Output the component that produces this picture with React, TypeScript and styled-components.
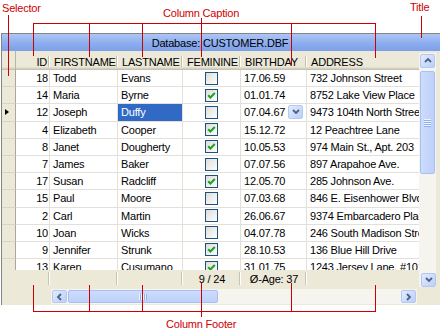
import React from "react";
import styled, { createGlobalStyle } from "styled-components";

const GlobalStyle = createGlobalStyle`
  html, body { margin: 0; padding: 0; background: #ffffff; }
  body { font-family: "Liberation Sans", Arial, sans-serif; }
  #root { width: 440px; height: 334px; }
`;

const COLS = "14px 34px 68px 65px 58px 66px 150px";
const GRID_LINE = "#e2e0d8";
const BEIGE = "#ece9d8";

const Page = styled.div`
  position: relative;
  width: 440px;
  height: 334px;
  overflow: hidden;
  background: #fff;
  padding-top: 33px;
  box-sizing: border-box;
`;

const Frame = styled.div`
  margin-left: 1px;
  width: 439px;
  border-top: 1px solid #858585;
  border-left: 1px solid #858585;
  box-sizing: border-box;
  background: ${BEIGE};
  display: flex;
  flex-direction: column;
`;

const TitleBar = styled.div`
  height: 17px;
  background: linear-gradient(#adc6f5, #8cadee 55%, #7d9fe8);
  display: flex;
  align-items: center;
  justify-content: center;
  padding-right: 2px;
  font-size: 11px;
  letter-spacing: -0.2px;
  color: #000;
`;

const Body = styled.div`
  display: flex;
  height: 236px;
`;

const GridArea = styled.div`
  width: 417px;
  display: flex;
  flex-direction: column;
  overflow: hidden;
`;

const HeaderRow = styled.div`
  display: grid;
  grid-template-columns: ${COLS};
  height: 19px;
  flex: none;
  background: ${BEIGE};
  box-shadow: inset 0 -1px #c5c1b0, inset 0 -2px #d6d2c2, inset 0 -3px #e2decd;
`;

const HeaderCell = styled.div<{ $right?: boolean }>`
  position: relative;
  display: flex;
  align-items: center;
  justify-content: ${(p) => (p.$right ? "flex-end" : "flex-start")};
  padding: 2px ${(p) => (p.$right ? "3px" : "4px")} 0 4px;
  font-size: 11px;
  letter-spacing: -0.2px;
  color: #000;
  white-space: nowrap;
  overflow: hidden;
  &::after {
    content: "";
    position: absolute;
    right: 1px;
    top: 5px;
    bottom: 3px;
    width: 1px;
    background: #c2bfae;
    box-shadow: 1px 0 0 #ffffff;
  }
`;

const IndicatorHead = styled.div`
  border-right: 1px solid #b9b6a6;
`;

const Viewport = styled.div`
  height: 200px;
  flex: none;
  overflow: hidden;
  background: #ffffff;
`;

const DataRow = styled.div`
  display: grid;
  grid-template-columns: ${COLS};
  height: 17.2px;
`;

const Indicator = styled.div`
  box-sizing: border-box;
  background: ${BEIGE};
  border-right: 1px solid #aca899;
  border-bottom: 1px solid #d9d5c5;
  display: flex;
  align-items: center;
  padding-left: 3px;
`;

const Arrow = styled.span`
  width: 0;
  height: 0;
  border-left: 4px solid #000;
  border-top: 3.5px solid transparent;
  border-bottom: 3.5px solid transparent;
`;

const Cell = styled.div<{ $align?: "left" | "right" | "center"; $selected?: boolean }>`
  box-sizing: border-box;
  border-right: 1px solid ${GRID_LINE};
  border-bottom: 1px solid ${GRID_LINE};
  display: flex;
  align-items: center;
  justify-content: ${(p) =>
    p.$align === "right" ? "flex-end" : p.$align === "center" ? "center" : "flex-start"};
  padding: 0 ${(p) => (p.$align === "right" ? "1px" : "3px")} 0 3px;
  white-space: nowrap;
  overflow: hidden;
  font-size: 11px;
  letter-spacing: -0.2px;
  color: ${(p) => (p.$selected ? "#ffffff" : "#000000")};
  background: ${(p) => (p.$selected ? "#316ac5" : "transparent")};
`;

const ComboButton = styled.span`
  margin-left: auto;
  width: 15px;
  height: 14px;
  box-sizing: border-box;
  border: 1px solid #b4c8f2;
  border-radius: 2px;
  background: linear-gradient(135deg, #e3ecfe, #b9cef9);
  display: flex;
  align-items: center;
  justify-content: center;
`;

const FooterRow = styled.div`
  display: grid;
  grid-template-columns: ${COLS};
  height: 17px;
  flex: none;
  background: ${BEIGE};
`;

const FooterCell = styled.div<{ $sep?: boolean }>`
  position: relative;
  display: flex;
  align-items: center;
  justify-content: center;
  font-size: 11px;
  letter-spacing: -0.2px;
  color: #000;
  white-space: nowrap;
  &::after {
    content: "";
    display: ${(p) => (p.$sep ? "block" : "none")};
    position: absolute;
    right: 1px;
    top: 2px;
    bottom: 2px;
    width: 1px;
    background: #c6c3b4;
    box-shadow: 1px 0 0 #ffffff;
  }
`;

const VScroll = styled.div`
  width: 17px;
  margin-top: 2px;
  box-sizing: border-box;
  padding: 1px 0 0;
  background: #f5f4ef;
  display: flex;
  flex-direction: column;
  align-items: center;
`;

const Gutter = styled.div`
  width: 4px;
`;

const ScrollButton = styled.div<{ $push?: boolean }>`
  width: 15px;
  height: 14px;
  flex: none;
  box-sizing: border-box;
  margin-top: ${(p) => (p.$push ? "auto" : "0")};
  margin-left: ${(p) => (p.$push ? "auto" : "0")};
  border: 1px solid #b3c7f2;
  border-radius: 2px;
  background: linear-gradient(135deg, #e2ebfe, #bbcff9);
  display: flex;
  align-items: center;
  justify-content: center;
`;

const VThumb = styled.div`
  width: 15px;
  height: 103px;
  margin-top: 3px;
  box-sizing: border-box;
  border: 1px solid #a9c0f1;
  border-radius: 2px;
  background: linear-gradient(90deg, #cddcfc, #bdd0fa);
  display: flex;
  align-items: center;
  justify-content: center;
`;

const VGrip = styled.span`
  width: 7px;
  height: 8px;
  background: repeating-linear-gradient(to bottom, #eef3fe 0 1px, #8fb0f2 1px 2px);
`;

const HStrip = styled.div`
  height: 18px;
  padding: 2px 0 0 49px;
  box-sizing: border-box;
  display: flex;
`;

const HScroll = styled.div`
  width: 366px;
  height: 15px;
  padding: 1px;
  box-sizing: border-box;
  background: #f5f4ef;
  display: flex;
`;

const HButton = styled(ScrollButton)`
  height: 13px;
`;

const HThumb = styled.div`
  width: 150px;
  height: 13px;
  margin-left: 1px;
  box-sizing: border-box;
  border: 1px solid #a9c0f1;
  border-radius: 2px;
  background: linear-gradient(180deg, #cddcfc, #bdd0fa);
  display: flex;
  align-items: center;
  justify-content: center;
`;

const HGrip = styled.span`
  width: 8px;
  height: 6px;
  background: repeating-linear-gradient(to right, #eef3fe 0 1px, #8fb0f2 1px 2px);
`;

const Callouts = styled.svg`
  position: absolute;
  left: 0;
  top: 0;
  width: 440px;
  height: 334px;
  pointer-events: none;
`;

const Label = styled.span<{ $x: number; $y: number }>`
  position: absolute;
  left: ${(p) => p.$x}px;
  top: ${(p) => p.$y}px;
  color: #cc0000;
  font-size: 11px;
  line-height: 13px;
  letter-spacing: -0.2px;
  white-space: nowrap;
`;

type Chevron = "up" | "down" | "left" | "right";
const chevronPath: Record<Chevron, string> = {
  up: "M1 5 L4 2 L7 5",
  down: "M1 2 L4 5 L7 2",
  left: "M5 1 L2 4 L5 7",
  right: "M2 1 L5 4 L2 7",
};

const ChevronIcon = ({ dir }: { dir: Chevron }) => (
  <svg width="8" height="8" viewBox="0 0 8 8">
    <path d={chevronPath[dir]} fill="none" stroke="#4d6185" strokeWidth="1.8" />
  </svg>
);

const CheckBox = ({ checked }: { checked: boolean }) => (
  <svg width="13" height="13" viewBox="0 0 13 13">
    <defs>
      <linearGradient id="cbfill" x1="0" y1="0" x2="1" y2="1">
        <stop offset="0" stopColor="#dcdcd6" />
        <stop offset="1" stopColor="#ffffff" />
      </linearGradient>
    </defs>
    <rect x="0.5" y="0.5" width="12" height="12" fill="url(#cbfill)" stroke="#1c5180" />
    {checked && (
      <path d="M3.2 6.2 L5.4 8.5 L9.8 4" fill="none" stroke="#21a121" strokeWidth="2" />
    )}
  </svg>
);

type Customer = {
  id: number;
  first: string;
  last: string;
  female: boolean;
  birthday: string;
  address: string;
};

const customers: Customer[] = [
  { id: 18, first: "Todd", last: "Evans", female: false, birthday: "17.06.59", address: "732 Johnson Street" },
  { id: 14, first: "Maria", last: "Byrne", female: true, birthday: "01.01.74", address: "8752 Lake View Place" },
  { id: 12, first: "Joseph", last: "Duffy", female: false, birthday: "07.04.67", address: "9473 104th North Street" },
  { id: 4, first: "Elizabeth", last: "Cooper", female: true, birthday: "15.12.72", address: "12 Peachtree Lane" },
  { id: 8, first: "Janet", last: "Dougherty", female: true, birthday: "10.05.53", address: "974 Main St., Apt. 203" },
  { id: 7, first: "James", last: "Baker", female: false, birthday: "07.07.56", address: "897 Arapahoe Ave." },
  { id: 17, first: "Susan", last: "Radcliff", female: true, birthday: "12.05.70", address: "285 Johnson Ave." },
  { id: 15, first: "Paul", last: "Moore", female: false, birthday: "07.03.68", address: "846 E. Eisenhower Blvd." },
  { id: 2, first: "Carl", last: "Martin", female: false, birthday: "26.06.67", address: "9374 Embarcadero Place" },
  { id: 10, first: "Joan", last: "Wicks", female: false, birthday: "04.07.78", address: "246 South Madison Street" },
  { id: 9, first: "Jennifer", last: "Strunk", female: true, birthday: "28.10.53", address: "136 Blue Hill Drive" },
  { id: 13, first: "Karen", last: "Cusumano", female: true, birthday: "31.01.75", address: "1243 Jersey Lane, #101" },
];

const CURRENT = 2;

const captionDrops: [number, number, number][] = [
  [33.5, 23, 56],
  [89.5, 23, 57],
  [142.5, 23, 57],
  [201.5, 18, 57],
  [291.5, 23, 65],
  [375.5, 23, 58],
];

const footerRises: [number, number, number][] = [
  [33.5, 285, 312],
  [89.5, 285, 312],
  [142.5, 285, 312],
  [201.5, 283, 317],
  [291.5, 283, 312],
  [375.5, 285, 312],
];

export default function App() {
  return (
    <>
      <GlobalStyle />
      <Page>
        <Frame>
          <TitleBar>Database: CUSTOMER.DBF</TitleBar>
          <Body>
            <GridArea>
              <HeaderRow>
                <IndicatorHead />
                <HeaderCell $right>ID</HeaderCell>
                <HeaderCell>FIRSTNAME</HeaderCell>
                <HeaderCell>LASTNAME</HeaderCell>
                <HeaderCell>FEMININE</HeaderCell>
                <HeaderCell>BIRTHDAY</HeaderCell>
                <HeaderCell>ADDRESS</HeaderCell>
              </HeaderRow>
              <Viewport>
                {customers.map((c, i) => (
                  <DataRow key={c.id}>
                    <Indicator>{i === CURRENT && <Arrow />}</Indicator>
                    <Cell $align="right">{c.id}</Cell>
                    <Cell>{c.first}</Cell>
                    <Cell $selected={i === CURRENT}>{c.last}</Cell>
                    <Cell $align="center">
                      <CheckBox checked={c.female} />
                    </Cell>
                    <Cell>
                      {c.birthday}
                      {i === CURRENT && (
                        <ComboButton>
                          <ChevronIcon dir="down" />
                        </ComboButton>
                      )}
                    </Cell>
                    <Cell>{c.address}</Cell>
                  </DataRow>
                ))}
              </Viewport>
              <FooterRow>
                <FooterCell />
                <FooterCell $sep />
                <FooterCell $sep />
                <FooterCell $sep />
                <FooterCell $sep>9 / 24</FooterCell>
                <FooterCell $sep>Ø-Age: 37</FooterCell>
                <FooterCell />
              </FooterRow>
            </GridArea>
            <VScroll>
              <ScrollButton>
                <ChevronIcon dir="up" />
              </ScrollButton>
              <VThumb>
                <VGrip />
              </VThumb>
              <ScrollButton $push>
                <ChevronIcon dir="down" />
              </ScrollButton>
            </VScroll>
            <Gutter />
          </Body>
          <HStrip>
            <HScroll>
              <HButton>
                <ChevronIcon dir="left" />
              </HButton>
              <HThumb>
                <HGrip />
              </HThumb>
              <HButton $push>
                <ChevronIcon dir="right" />
              </HButton>
            </HScroll>
          </HStrip>
        </Frame>

        <Callouts viewBox="0 0 440 334">
          <g stroke="#cc0000" strokeWidth="1" fill="none" shapeRendering="crispEdges">
            <line x1="8.5" y1="15" x2="8.5" y2="76" />
            <line x1="421.5" y1="16" x2="421.5" y2="38" />
            <line x1="33" y1="23.5" x2="376" y2="23.5" />
            {captionDrops.map(([x, y1, y2]) => (
              <line key={`c${x}`} x1={x} y1={y1} x2={x} y2={y2} />
            ))}
            <line x1="33" y1="311.5" x2="376" y2="311.5" />
            {footerRises.map(([x, y1, y2]) => (
              <line key={`f${x}`} x1={x} y1={y1} x2={x} y2={y2} />
            ))}
          </g>
        </Callouts>
        <Label $x={2} $y={2}>Selector</Label>
        <Label $x={163} $y={7}>Column Caption</Label>
        <Label $x={410} $y={1}>Title</Label>
        <Label $x={166} $y={318}>Column Footer</Label>
      </Page>
    </>
  );
}
